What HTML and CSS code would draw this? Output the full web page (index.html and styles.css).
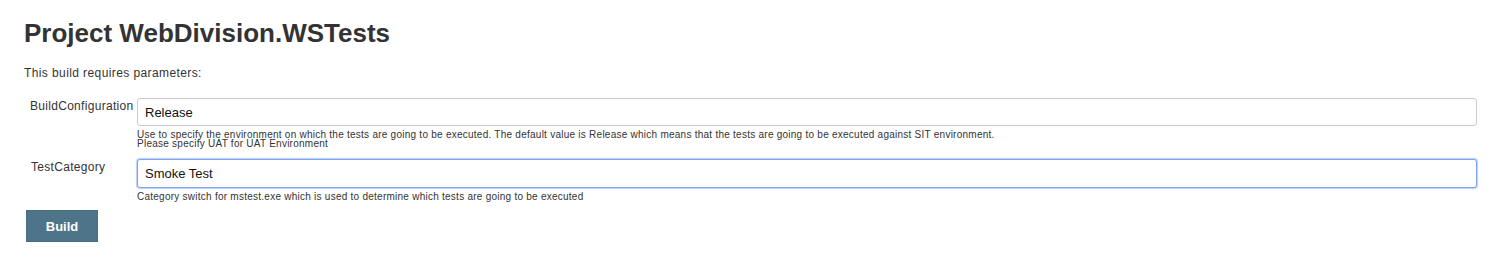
FILE: index.html
```html
<!DOCTYPE html>
<html lang="en">
<head>
<meta charset="utf-8">
<title>Project WebDivision.WSTests</title>
<link rel="stylesheet" href="styles.css">
</head>
<body>
<div class="page">
  <h1 class="title">Project WebDivision.WSTests</h1>
  <p class="intro">This build requires parameters:</p>
  <form class="params">
    <div class="row">
      <label class="label">BuildConfiguration</label>
      <div class="field">
        <input class="input" type="text" value="Release">
        <div class="help">Use to specify the environment on which the tests are going to be executed. The default value is Release which means that the tests are going to be executed against SIT environment.<br>Please specify UAT for UAT Environment</div>
      </div>
    </div>
    <div class="row">
      <label class="label">TestCategory</label>
      <div class="field">
        <input class="input focused" type="text" value="Smoke Test">
        <div class="help">Category switch for mstest.exe which is used to determine which tests are going to be executed</div>
      </div>
    </div>
    <div class="actions">
      <button class="btn" type="button">Build</button>
    </div>
  </form>
</div>
</body>
</html>
```
FILE: styles.css
```css
html, body {
  margin: 0;
  padding: 0;
  background: #fff;
}
body {
  font-family: "Liberation Sans", Arial, sans-serif;
  color: #333;
}
.page {
  padding: 18px 18px 0 24px;
}
.title {
  margin: 0;
  font-size: 26px;
  line-height: 30px;
  font-weight: bold;
  color: #333;
}
.intro {
  margin: 17px 0 0 0;
  font-size: 12px;
  line-height: 16px;
  letter-spacing: 0.4px;
}
.params {
  margin-top: 17px;
  display: flex;
  flex-direction: column;
}
.row {
  display: grid;
  grid-template-columns: 107px 1fr;
  padding-left: 6px;
  margin-bottom: 11px;
}
.row + .row {
  margin-bottom: 9px;
}
.label {
  font-size: 12px;
  line-height: 17px;
  letter-spacing: 0.3px;
  color: #333;
}
.row + .row .label {
  line-height: 13px;
  padding-top: 2px;
  padding-left: 1px;
}
.field {
  display: flex;
  flex-direction: column;
}
.input {
  box-sizing: border-box;
  height: 28px;
  width: 100%;
  margin: 0;
  border: 1px solid #ccc;
  border-radius: 3px;
  padding: 0 7px;
  font-family: "Liberation Sans", Arial, sans-serif;
  font-size: 13px;
  color: #111;
  background: #fff;
  outline: none;
}
.input.focused {
  height: 29px;
  border: 1px solid #7ea6ee;
  box-shadow: 0 0 1px 1px rgba(126, 166, 238, 0.55);
}
.help {
  margin-top: 4px;
  font-size: 10px;
  line-height: 9px;
  letter-spacing: 0.25px;
  color: #333;
}
.actions {
  display: flex;
}
.btn {
  margin-left: 2px;
  width: 72px;
  height: 32px;
  border: 1px solid #4a6f84;
  background: #4e7489;
  color: #fff;
  font-family: "Liberation Sans", Arial, sans-serif;
  font-size: 13px;
  font-weight: bold;
  padding: 0;
  cursor: pointer;
}
```
